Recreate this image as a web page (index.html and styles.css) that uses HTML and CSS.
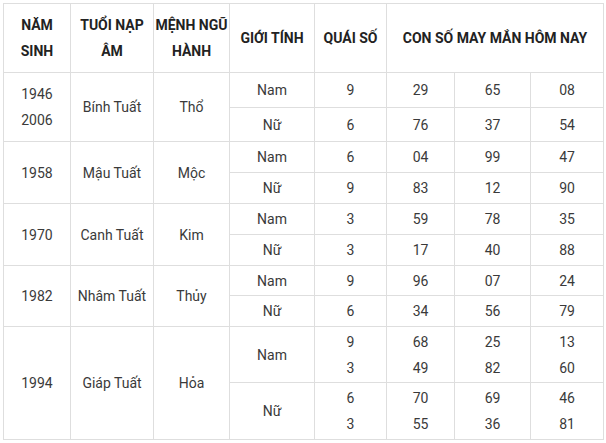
FILE: index.html
```html
<!DOCTYPE html>
<html lang="vi">
<head>
<meta charset="utf-8">
<link rel="stylesheet" href="styles.css">
</head>
<body>
<table class="lucky">
  <colgroup>
    <col class="c1"><col class="c2"><col class="c3"><col class="c4"><col class="c5"><col class="c6"><col class="c7"><col class="c8">
  </colgroup>
  <thead>
    <tr class="h-head">
      <th>NĂM<br>SINH</th>
      <th>TUỔI NẠP<br>ÂM</th>
      <th>MỆNH NGŨ<br>HÀNH</th>
      <th>GIỚI TÍNH</th>
      <th>QUÁI SỐ</th>
      <th colspan="3">CON SỐ MAY MẮN HÔM NAY</th>
    </tr>
  </thead>
  <tbody>
    <tr class="h35">
      <td rowspan="2">1946<br>2006</td>
      <td rowspan="2">Bính Tuất</td>
      <td rowspan="2">Thổ</td>
      <td>Nam</td><td>9</td><td>29</td><td>65</td><td>08</td>
    </tr>
    <tr class="h34">
      <td>Nữ</td><td>6</td><td>76</td><td>37</td><td>54</td>
    </tr>
    <tr class="h31">
      <td rowspan="2">1958</td>
      <td rowspan="2">Mậu Tuất</td>
      <td rowspan="2">Mộc</td>
      <td>Nam</td><td>6</td><td>04</td><td>99</td><td>47</td>
    </tr>
    <tr class="h31">
      <td>Nữ</td><td>9</td><td>83</td><td>12</td><td>90</td>
    </tr>
    <tr class="h31">
      <td rowspan="2">1970</td>
      <td rowspan="2">Canh Tuất</td>
      <td rowspan="2">Kim</td>
      <td>Nam</td><td>3</td><td>59</td><td>78</td><td>35</td>
    </tr>
    <tr class="h31">
      <td>Nữ</td><td>3</td><td>17</td><td>40</td><td>88</td>
    </tr>
    <tr class="h30">
      <td rowspan="2">1982</td>
      <td rowspan="2">Nhâm Tuất</td>
      <td rowspan="2">Thủy</td>
      <td>Nam</td><td>9</td><td>96</td><td>07</td><td>24</td>
    </tr>
    <tr class="h31">
      <td>Nữ</td><td>6</td><td>34</td><td>56</td><td>79</td>
    </tr>
    <tr class="h56">
      <td rowspan="2">1994</td>
      <td rowspan="2">Giáp Tuất</td>
      <td rowspan="2">Hỏa</td>
      <td>Nam</td><td>9<br>3</td><td>68<br>49</td><td>25<br>82</td><td>13<br>60</td>
    </tr>
    <tr class="h57">
      <td>Nữ</td><td>6<br>3</td><td>70<br>55</td><td>69<br>36</td><td>46<br>81</td>
    </tr>
  </tbody>
</table>
</body>
</html>
```

FILE: styles.css
```css
html, body {
  margin: 0;
  padding: 0;
  background: #ffffff;
}
body {
  padding: 3px 0 0 3px;
  font-family: Roboto, "Liberation Sans", Arial, sans-serif;
  font-size: 14px;
  color: #3a3a3a;
}
.lucky {
  border-collapse: collapse;
  table-layout: fixed;
  width: 601px;
}
.lucky th,
.lucky td {
  border: 1px solid #dedede;
  padding: 0;
  text-align: center;
  vertical-align: middle;
  line-height: 26px;
}
.lucky th {
  font-weight: 700;
  color: #222;
}
.c1 { width: 67px; }
.c2 { width: 83px; }
.c3 { width: 76px; }
.c4 { width: 85px; }
.c5 { width: 72px; }
.c6 { width: 68px; }
.c7 { width: 76px; }
.c8 { width: 73px; }
.h-head { height: 69px; }
.h35 { height: 35px; }
.h34 { height: 34px; }
.h31 { height: 31px; }
.h30 { height: 30px; }
.h56 { height: 56px; }
.h57 { height: 57px; }
```
